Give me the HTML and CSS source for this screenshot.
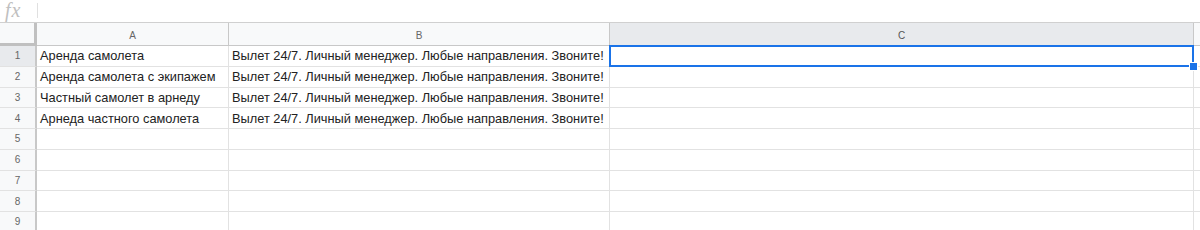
FILE: index.html
```html
<!DOCTYPE html>
<html>
<head>
<meta charset="utf-8">
<link rel="stylesheet" href="styles.css">
</head>
<body>
<div class="fbar">
  <span class="fx">fx</span>
  <span class="fdiv"></span>
</div>
<div class="sheet">
  <div class="grid">
    <div class="corner"></div>
    <div class="ch">A</div>
    <div class="ch">B</div>
    <div class="ch ch-sel">C</div>
    <div class="ch ch-end"></div>

    <div class="rn rn-sel">1</div>
    <div class="cell">Аренда самолета</div>
    <div class="cell">Вылет 24/7. Личный менеджер. Любые направления. Звоните!</div>
    <div class="cell"></div>
    <div class="cell cell-end"></div>

    <div class="rn">2</div>
    <div class="cell">Аренда самолета с экипажем</div>
    <div class="cell">Вылет 24/7. Личный менеджер. Любые направления. Звоните!</div>
    <div class="cell"></div>
    <div class="cell cell-end"></div>

    <div class="rn">3</div>
    <div class="cell">Частный самолет в арнеду</div>
    <div class="cell">Вылет 24/7. Личный менеджер. Любые направления. Звоните!</div>
    <div class="cell"></div>
    <div class="cell cell-end"></div>

    <div class="rn">4</div>
    <div class="cell">Арнеда частного самолета</div>
    <div class="cell">Вылет 24/7. Личный менеджер. Любые направления. Звоните!</div>
    <div class="cell"></div>
    <div class="cell cell-end"></div>

    <div class="rn">5</div>
    <div class="cell"></div><div class="cell"></div><div class="cell"></div><div class="cell cell-end"></div>
    <div class="rn">6</div>
    <div class="cell"></div><div class="cell"></div><div class="cell"></div><div class="cell cell-end"></div>
    <div class="rn">7</div>
    <div class="cell"></div><div class="cell"></div><div class="cell"></div><div class="cell cell-end"></div>
    <div class="rn">8</div>
    <div class="cell"></div><div class="cell"></div><div class="cell"></div><div class="cell cell-end"></div>
    <div class="rn">9</div>
    <div class="cell"></div><div class="cell"></div><div class="cell"></div><div class="cell cell-end"></div>
  </div>
  <div class="selection"><span class="handle"></span></div>
</div>
</body>
</html>
```

FILE: styles.css
```css
html, body {
  margin: 0;
  padding: 0;
  background: #ffffff;
  font-family: "Liberation Sans", Arial, sans-serif;
  overflow: hidden;
}

.fbar {
  height: 23px;
  box-sizing: border-box;
  border-bottom: 1px solid #d0d0d0;
  display: flex;
  align-items: center;
  padding-left: 5px;
}

.fx {
  font-family: "Liberation Serif", "Times New Roman", serif;
  font-style: italic;
  font-size: 20px;
  color: #c0c0c0;
  line-height: 20px;
  width: 21px;
  margin-top: -3px;
  letter-spacing: 1px;
}

.fdiv {
  width: 1px;
  height: 15px;
  background: #e0e0e0;
  margin-left: 11px;
  margin-top: -2px;
}

.sheet {
  position: relative;
}

.grid {
  display: grid;
  grid-template-columns: 37px 192px 381px 584px 1fr;
  grid-template-rows: 23px repeat(9, 20.75px);
}

.corner {
  background: #f8f9fa;
  box-sizing: border-box;
  border-right: 3px solid #c0c0c0;
  border-bottom: 3px solid #c0c0c0;
}

.ch {
  background: #f8f9fa;
  box-sizing: border-box;
  border-right: 1px solid #c8c8c8;
  border-bottom: 1px solid #c8c8c8;
  font-size: 10px;
  color: #666666;
  display: flex;
  align-items: center;
  justify-content: center;
  padding-top: 2px;
}

.ch-sel {
  background: #e8eaed;
  color: #555555;
}

.ch-end {
  background: #f8f9fa;
  border-right: none;
}

.rn {
  background: #f8f9fa;
  box-sizing: border-box;
  border-right: 2px solid #c8c8c8;
  border-bottom: 1px solid #e2e2e2;
  font-size: 10px;
  color: #666666;
  display: flex;
  align-items: center;
  justify-content: center;
}

.rn-sel {
  background: #e8eaed;
}

.cell {
  box-sizing: border-box;
  border-right: 1px solid #e2e2e2;
  border-bottom: 1px solid #e2e2e2;
  font-size: 12.8px;
  color: #222222;
  padding-left: 3px;
  display: flex;
  align-items: center;
  white-space: nowrap;
  overflow: hidden;
}

.cell-end {
  border-right: none;
}

.selection {
  position: absolute;
  left: 609px;
  top: 22px;
  width: 585px;
  height: 22px;
  box-sizing: border-box;
  border: 2px solid #1a73e8;
}

.handle {
  position: absolute;
  right: -6px;
  bottom: -6px;
  width: 7px;
  height: 7px;
  background: #1a73e8;
  border: 1px solid #ffffff;
}
```
